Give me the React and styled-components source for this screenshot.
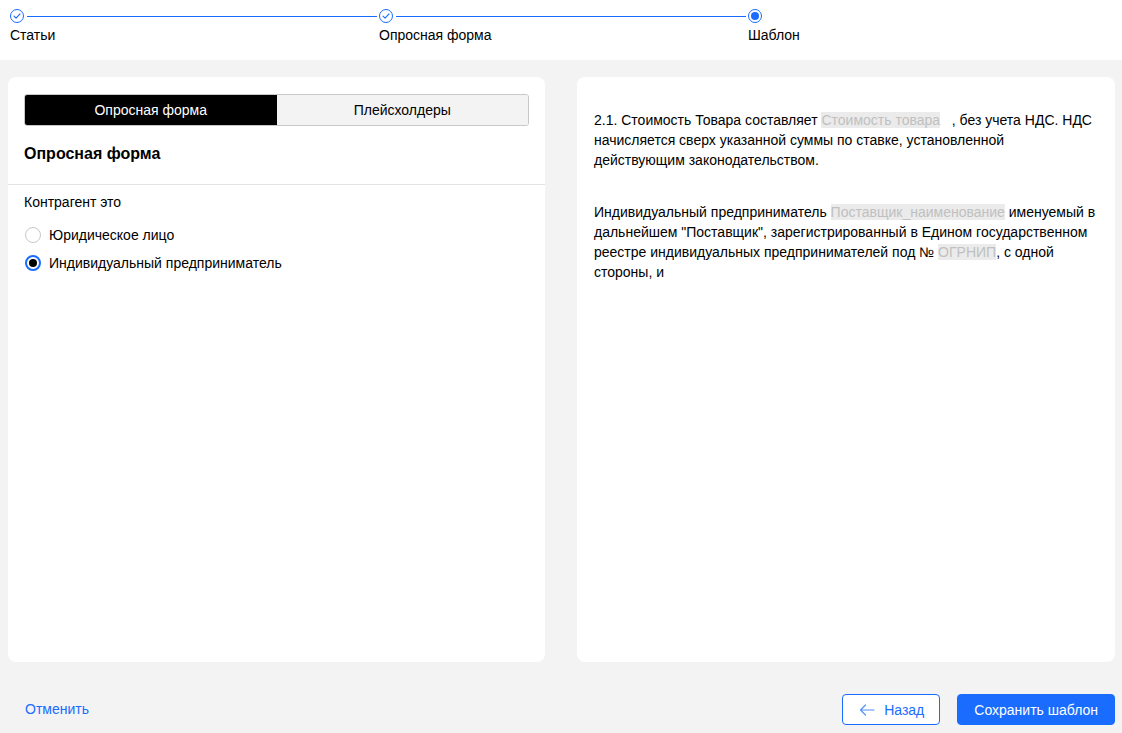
import React, { useState } from 'react';
import styled, { createGlobalStyle } from 'styled-components';

const BLUE = '#1a6cff';

const GlobalStyle = createGlobalStyle`
  html, body {
    margin: 0;
    padding: 0;
    height: 100%;
  }
  body {
    font-family: "Liberation Sans", Arial, sans-serif;
    font-size: 14px;
    color: #000;
    background: #f3f3f3;
  }
  #root {
    height: 100%;
  }
  * {
    box-sizing: border-box;
  }
`;

const Page = styled.div`
  height: 100vh;
  display: flex;
  flex-direction: column;
  background: #f3f3f3;
`;

const Stepper = styled.div`
  height: 60px;
  background: #fff;
  display: grid;
  grid-template-columns: repeat(3, 1fr);
  padding: 9px 5px 0 10px;
`;

const Step = styled.div`
  display: flex;
  flex-direction: column;
`;

const StepTrack = styled.div`
  display: flex;
  align-items: center;
  height: 14px;
`;

const StepCircle = styled.div`
  width: 14px;
  height: 14px;
  border-radius: 50%;
  border: 1px solid ${BLUE};
  flex: none;
  display: flex;
  align-items: center;
  justify-content: center;
  background: #fff;
`;

const StepDot = styled.div`
  width: 8px;
  height: 8px;
  border-radius: 50%;
  background: ${BLUE};
`;

const StepLine = styled.div`
  flex: 1;
  height: 1px;
  background: ${BLUE};
  margin: 0 2px 0 3px;
`;

const StepLabel = styled.div`
  margin-top: 2px;
  line-height: 20px;
  font-size: 14px;
`;

const Content = styled.div`
  flex: 1;
  display: grid;
  grid-template-columns: 537px 1fr;
  gap: 32px;
  padding: 17px 7px 0 8px;
  min-height: 0;
`;

const Card = styled.div`
  background: #fff;
  border-radius: 8px;
  display: flex;
  flex-direction: column;
`;

const CardHead = styled.div`
  padding: 17px 16px 20px;
  border-bottom: 1px solid #e3e3e3;
`;

const Tabs = styled.div`
  display: grid;
  grid-template-columns: 1fr 1fr;
  height: 32px;
  border: 1px solid #c8c8c8;
  border-radius: 3px;
  overflow: hidden;
`;

const Tab = styled.button`
  border: none;
  font-family: inherit;
  font-size: 14px;
  cursor: pointer;
  background: ${(p) => (p.$active ? '#000' : '#f3f3f3')};
  color: ${(p) => (p.$active ? '#fff' : '#000')};
`;

const Heading = styled.h2`
  margin: 18px 0 0;
  font-size: 16px;
  font-weight: 700;
  line-height: 20px;
`;

const CardBody = styled.div`
  padding: 7px 16px 16px;
`;

const FieldLabel = styled.div`
  line-height: 20px;
`;

const RadioGroup = styled.div`
  margin-top: 13px;
  display: flex;
  flex-direction: column;
  gap: 8px;
`;

const RadioRow = styled.label`
  display: flex;
  align-items: center;
  gap: 8px;
  height: 20px;
  padding-left: 1px;
  cursor: pointer;
`;

const RadioMark = styled.span`
  width: 16px;
  height: 16px;
  border-radius: 50%;
  flex: none;
  border: ${(p) => (p.$checked ? `2px solid ${BLUE}` : '1px solid #c8c8c8')};
  display: flex;
  align-items: center;
  justify-content: center;
  &::after {
    content: '';
    display: ${(p) => (p.$checked ? 'block' : 'none')};
    width: 8px;
    height: 8px;
    border-radius: 50%;
    background: #000;
  }
`;

const Preview = styled.div`
  padding: 33px 16px 16px 17px;
  line-height: 20px;
`;

const Paragraph = styled.p`
  margin: 0 0 32px;
`;

const Placeholder = styled.span`
  background: #ebebeb;
  color: #c0c0c0;
`;

const Footer = styled.div`
  height: 71px;
  display: flex;
  align-items: flex-start;
  justify-content: space-between;
  padding: 32px 7px 0 25px;
`;

const LinkButton = styled.button`
  border: none;
  background: none;
  padding: 0;
  font-family: inherit;
  font-size: 14px;
  color: ${BLUE};
  line-height: 31px;
  cursor: pointer;
`;

const Actions = styled.div`
  display: flex;
  gap: 17px;
`;

const Button = styled.button`
  height: 31px;
  border-radius: 4px;
  font-family: inherit;
  font-size: 14px;
  cursor: pointer;
  display: flex;
  align-items: center;
  gap: 9px;
  border: 1px solid ${BLUE};
  background: ${(p) => (p.$primary ? BLUE : '#fff')};
  color: ${(p) => (p.$primary ? '#fff' : BLUE)};
  padding: ${(p) => (p.$primary ? '0 16px' : '0 15px 0 16px')};
`;

const CheckIcon = () => (
  <svg width="8" height="8" viewBox="0 0 8 8" fill="none">
    <path d="M1 4.2 L3.1 6.2 L7 1.8" stroke={BLUE} strokeWidth="1.1" strokeLinecap="round" strokeLinejoin="round" />
  </svg>
);

const ArrowLeft = () => (
  <svg width="16" height="12" viewBox="0 0 16 12" fill="none">
    <path d="M15 6 H1.5 M6.5 1 L1.5 6 L6.5 11" stroke={BLUE} strokeWidth="1.2" strokeLinecap="round" strokeLinejoin="round" opacity="0.75" />
  </svg>
);

const steps = [
  { label: 'Статьи', done: true },
  { label: 'Опросная форма', done: true },
  { label: 'Шаблон', done: false },
];

export default function App() {
  const [tab, setTab] = useState('form');
  const [party, setParty] = useState('ip');

  return (
    <Page>
      <GlobalStyle />
      <Stepper>
        {steps.map((s, i) => (
          <Step key={s.label}>
            <StepTrack>
              <StepCircle>{s.done ? <CheckIcon /> : <StepDot />}</StepCircle>
              {i < steps.length - 1 && <StepLine />}
            </StepTrack>
            <StepLabel>{s.label}</StepLabel>
          </Step>
        ))}
      </Stepper>

      <Content>
        <Card>
          <CardHead>
            <Tabs>
              <Tab $active={tab === 'form'} onClick={() => setTab('form')}>
                Опросная форма
              </Tab>
              <Tab $active={tab === 'ph'} onClick={() => setTab('ph')}>
                Плейсхолдеры
              </Tab>
            </Tabs>
            <Heading>Опросная форма</Heading>
          </CardHead>
          <CardBody>
            <FieldLabel>Контрагент это</FieldLabel>
            <RadioGroup>
              <RadioRow onClick={() => setParty('ul')}>
                <RadioMark $checked={party === 'ul'} />
                Юридическое лицо
              </RadioRow>
              <RadioRow onClick={() => setParty('ip')}>
                <RadioMark $checked={party === 'ip'} />
                Индивидуальный предприниматель
              </RadioRow>
            </RadioGroup>
          </CardBody>
        </Card>

        <Card>
          <Preview>
            <Paragraph>
              2.1. Стоимость Товара составляет <Placeholder>Стоимость товара</Placeholder>
              {'\u00a0\u00a0 '}, без учета НДС. НДС начисляется сверх указанной суммы по ставке,
              установленной {'действующим\u00a0законодательством.'}
            </Paragraph>
            <Paragraph>
              Индивидуальный предприниматель <Placeholder>Поставщик_наименование</Placeholder>{' '}
              именуемый в дальнейшем "Поставщик", зарегистрированный в Едином государственном
              реестре индивидуальных предпринимателей под № <Placeholder>ОГРНИП</Placeholder>, с
              одной стороны, и
            </Paragraph>
          </Preview>
        </Card>
      </Content>

      <Footer>
        <LinkButton>Отменить</LinkButton>
        <Actions>
          <Button>
            <ArrowLeft />
            Назад
          </Button>
          <Button $primary>Сохранить шаблон</Button>
        </Actions>
      </Footer>
    </Page>
  );
}
